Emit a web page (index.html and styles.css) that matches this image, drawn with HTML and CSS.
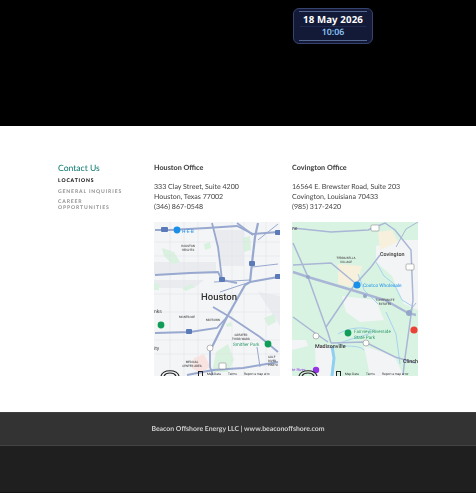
FILE: index.html
```html
<!DOCTYPE html>
<html lang="en">
<head>
<meta charset="utf-8">
<title>Contact Us</title>
<link rel="stylesheet" href="styles.css">
</head>
<body>
<header class="hero">
  <div class="clock">
    <div class="clock-date">18 May 2026</div>
    <div class="clock-time">10:06</div>
  </div>
</header>
<main class="contact">
  <nav class="side">
    <h2 class="side-title">Contact Us</h2>
    <a class="side-link active">LOCATIONS</a>
    <a class="side-link">GENERAL INQUIRIES</a>
    <a class="side-link">CAREER OPPORTUNITIES</a>
  </nav>
  <section class="office">
    <h3 class="office-name">Houston Office</h3>
    <p class="office-addr">333 Clay Street, Suite 4200<br>Houston, Texas 77002<br>(346) 867-0548</p>
    <div class="map">
      <svg viewBox="0 0 126 154" width="126" height="154">
        <rect width="126" height="154" fill="#f4f5f7"/>
        <g fill="#e9ebef"><path d="M0 40h62v12H0z"/><path d="M0 58h50l-10 8H0z"/><path d="M60 8h30v36H66z"/><path d="M104 70l22 4v30z"/></g>
        <g fill="#d9f1df">
          <path d="M8 26l12 4 6 10-8 2-8-8z"/><path d="M50 22l6-2 1 6-6 2z"/><path d="M62 130l12-8 6 16-6 12H58z"/><path d="M110 96l10-4 2 8-8 4z"/><path d="M88 16l8-2 1 14-7 2z"/><path d="M28 66l10-4 2 3-8 4z"/><path d="M0 62l5-1v7H0z"/><path d="M72 102l5-2 1 4-5 1z"/>
        </g>
        <path d="M40 136l10-4 6 12-8 8-10-6z" fill="#f8e3e0"/>
        <g fill="none" stroke="#e2e4e9" stroke-width=".6"><path d="M0 20h126M0 34h126M0 72h126M0 90h126M0 118h126M0 132h126M16 0v154M30 0v154M44 0v154M78 0v154M90 0v154M112 0v154"/></g>
        <g fill="none" stroke="#98a8cf" stroke-width="1.800">
          <path d="M1 8h15l37-2 30-2 16 8 25-2"/>
          <path d="M58 1l6 24 2 16 2 17"/>
          <path d="M1 53l35-2 28-1 4 8 15 3"/>
          <path d="M124 55l-28 5"/>
          <path d="M104 1l-3 14-3 26-2 19-5 3-18 32-15 30" stroke-width="2.200"/>
          <path d="M83 1l16 12"/>
          <path d="M59 85l17 10 30 20 18 15"/>
          <path d="M1 111l35-1 27-4 10-11"/>
          <path d="M56 126v19l3 8"/>
          <path d="M33 153l26-5 30-2 35-6"/>
          <path d="M103 125l3 20" stroke-width="1"/>
          <path d="M60 60l36-2M66 70l30-10" stroke-width="1"/>
          <path d="M124 42l-26 3M124 2l-20 16" stroke-width="1"/>
        </g>
        <text class="m-label big" x="47" y="78">Houston</text>
        <text class="m-label tiny mid" x="34" y="25">HOUSTON</text><text class="m-label tiny mid" x="34" y="29">HEIGHTS</text>
        <text class="m-label tiny mid" x="33" y="96">MONTROSE</text><text class="m-label tiny mid" x="59" y="99">MIDTOWN</text>
        <text class="m-label tiny mid" x="87" y="114">GREATER</text><text class="m-label tiny mid" x="87" y="117.500">THIRD WARD</text>
        <text class="m-label tiny mid" x="38" y="141">MEDICAL</text><text class="m-label tiny mid" x="38" y="145">CENTER AREA</text>
        <text class="m-label tiny" x="114" y="136">GULF</text><text class="m-label tiny" x="114" y="140">RIVER</text><text class="m-label tiny" x="114" y="144">PINE VI</text>
        <text class="m-label green" x="79" y="124">Smither Park</text>
        <text class="m-label blue" x="28" y="10.500">H-E-B</text>
        <text class="m-label small" x="0" y="91">nks</text><text class="m-label small" x="0" y="128">ity</text>
        <circle cx="23" cy="8" r="3.400" fill="#1a8fe8"/><circle cx="7" cy="103" r="3.400" fill="#0f9d58"/><circle cx="114" cy="122" r="3.400" fill="#0f9d58"/>
        <g fill="#5a7ab8"><rect x="7" y="5" width="7" height="5" rx="1"/><rect x="95" y="39" width="6" height="5" rx="1"/><rect x="65" y="55" width="6" height="5" rx="1"/><rect x="121" y="52" width="6" height="5" rx="1"/><rect x="32" y="107" width="6" height="5" rx="1"/><rect x="121" y="8" width="6" height="5" rx="1"/></g>
        <circle cx="56" cy="126" r="3" fill="#fff" stroke="#777" stroke-width=".5"/><rect x="65" y="141" width="7" height="6" rx="1" fill="#fff" stroke="#777" stroke-width=".5"/>
        <g fill="none" stroke="#222" stroke-width="1.200"><path d="M7 154c2-7 16-7 18 0M10 154c2-4 10-4 12 0"/></g>
        <rect x="44.500" y="149.500" width="4" height="5" fill="none" stroke="#222"/>
        <text class="m-attr" x="53" y="153">Map Data</text><text class="m-attr" x="74" y="153">Terms</text><text class="m-attr" x="90" y="153">Report a map erro</text>
      </svg>
    </div>
  </section>
  <section class="office">
    <h3 class="office-name">Covington Office</h3>
    <p class="office-addr">16564 E. Brewster Road, Suite 203<br>Covington, Louisiana 70433<br>(985) 317-2420</p>
    <div class="map">
      <svg viewBox="0 0 126 154" width="126" height="154">
        <rect width="126" height="154" fill="#d9f3e3"/>
        <g fill="#f3f4f5"><path d="M84 24l26-6 16 0v70l-14-6-12-28-16-14z"/><path d="M23 124h17l4 30H24z"/><path d="M50 74l34 4 8 20-24 2-14-10z"/><path d="M72 124l30 10 10 20H78z"/><path d="M0 118h14l2 6-16 4z"/></g>
        <g fill="#f6f0dc"><path d="M46 42l24 2-6 22-18-4z"/><path d="M86 10l14-2 6 12-18 8z"/></g>
        <g fill="none" stroke="#a6d3ee" stroke-width="1">
          <path d="M84 40l8 14 10 8 8 16 10 6"/>
          <path d="M46 112c10-6 24-8 34-4 8 3-22 8-34 14 8 4 20 0 26 6"/>
          <path d="M94 90l10 22 4 30"/>
          <path d="M66 52l6 16 14 14"/>
        </g>
        <path d="M40 124l2 12-2 18" fill="none" stroke="#8fd0f0" stroke-width="3"/>
        <g fill="none" stroke="#a9b6d6" stroke-width="1.500">
          <path d="M1 6l38 4 37-2 17-7 10 7 16 20 2 50-2 15-6 43-2 17"/>
          <path d="M1 50l15 5 47 14 30 9 23 13 8 2" stroke-width="2.400"/>
          <path d="M1 21l15 34 20 56 3 10"/>
          <path d="M34 105l27-40 18-20 9-12"/>
          <path d="M1 43l38-2 24 20"/>
          <path d="M39 121l34-1 30 15 21 6"/>
          <path d="M1 95l22 16 13 9"/>
          <path d="M104 25l10-18 12-7M116 91l8-10" stroke-width="1"/>
        </g>
        <circle cx="16" cy="55" r="2" fill="#94a6c8"/><circle cx="73" cy="74" r="2" fill="#94a6c8"/><circle cx="117" cy="91" r="3" fill="#94a6c8"/>
        <text class="m-label dark" x="88" y="34">Covington</text>
        <text class="m-label dark" x="23" y="126">Madisonville</text>
        <text class="m-label dark" x="111" y="141">Clinch</text>
        <text class="m-label tiny mid" x="54" y="37">TERRA BELLA</text><text class="m-label tiny mid" x="54" y="41">VILLAGE</text>
        <text class="m-label tiny mid" x="93" y="79">TCHEFUNCTE</text><text class="m-label tiny mid" x="93" y="83">ESTATES</text>
        <text class="m-label blue" x="71" y="65">Costco Wholesale</text>
        <text class="m-label green" x="62" y="111">Fairview-Riverside</text><text class="m-label green" x="62" y="117">State Park</text>
        <text class="m-label small" x="0" y="8">ne</text>
        <text class="m-label purple" x="0" y="149">te River</text>
        <circle cx="65" cy="63" r="3.600" fill="#1a8fe8"/><circle cx="56" cy="111" r="3.400" fill="#0f9d58"/><circle cx="122" cy="108" r="3.600" fill="#ea4335"/><circle cx="24" cy="148" r="3.200" fill="#9334e6"/>
        <g fill="#fff" stroke="#777" stroke-width=".5"><rect x="79" y="3" width="8" height="6" rx="1"/><rect x="114" y="42" width="8" height="6" rx="1"/><circle cx="24" cy="114" r="3"/><circle cx="74" cy="121" r="3"/></g>
        <g fill="none" stroke="#222" stroke-width="1.200"><path d="M7 154c2-7 16-7 18 0M10 154c2-4 10-4 12 0"/></g>
        <rect x="44.500" y="149.500" width="4" height="5" fill="none" stroke="#222"/>
        <text class="m-attr" x="53" y="153">Map Data</text><text class="m-attr" x="74" y="153">Terms</text><text class="m-attr" x="90" y="153">Report a map error</text>
      </svg>
    </div>
  </section>
</main>
<footer class="foot">
  <div class="foot-top">Beacon Offshore Energy LLC | www.beaconoffshore.com</div>
  <div class="foot-bottom"></div>
</footer>
</body>
</html>
```
FILE: styles.css
```css
* { box-sizing: border-box; }
html, body { margin: 0; padding: 0; }
body { background: #fff; font-family: "Lato", "Liberation Sans", sans-serif; height: 500px; overflow: hidden; text-rendering: geometricPrecision; }
.hero { background: #000; height: 126px; padding: 8px 0 0 293px; }
.clock { position: relative; width: 80px; height: 36px; background: #121a38; border: 1px solid #36436f; border-radius: 6px; text-align: center; padding-top: 4px; }
.clock::before, .clock::after { content: ""; position: absolute; left: 5px; right: 5px; height: 1px; background: #56678f; }
.clock::before { top: 2px; }
.clock::after { bottom: 2px; }
.clock-date { color: #fff; font: 700 9.7px/13px "Noto Sans", sans-serif; letter-spacing: .1px; white-space: nowrap; border-bottom: 1px solid #1f2a52; margin: 0 6px; }
.clock-time { color: #8cc4f5; font: 600 8.8px/11px "Noto Sans", sans-serif; }
.contact { height: 286px; display: flex; padding: 37px 0 0 58px; will-change: transform; }
.side { width: 96px; }
.side-title { margin: 0 0 4px; color: #0b7a6e; font: 400 8.6px/11px "Lato", sans-serif; }
.side-link { display: block; width: 70px; color: #999; font: 900 5.1px/6.500px "Lato", sans-serif; letter-spacing: .85px; margin-bottom: 4px; }
.side-link.active { color: #111; }
.side-link:nth-of-type(2) { margin-bottom: 3.500px; }
.office { width: 126px; margin-right: 12px; }
.office-name { margin: 0; font: 900 7.2px/10px "Lato", sans-serif; color: #4a4a4a; }
.office-addr { margin: 9px 0 0; font: 400 7.05px/9.800px "Lato", sans-serif; color: #444; height: 40px; }
.map { width: 126px; height: 154px; }
.map svg { display: block; filter: blur(.3px); }
.m-label { font-family: "Roboto", sans-serif; }
.mid { text-anchor: middle; }
.big { font-size: 9.500px; font-weight: 500; fill: #333; }
.dark { font-size: 5.400px; font-weight: 500; fill: #333; }
.small { font-size: 5px; fill: #444; }
.tiny { font-size: 3px; fill: #555; font-weight: 500; }
.green { font-size: 4.600px; fill: #2f9a6a; }
.blue { font-size: 4.800px; fill: #1a8fe8; }
.purple { font-size: 4px; fill: #9334e6; }
.m-attr { font: 3.200px "Roboto", sans-serif; fill: #333; }
.foot { will-change: transform; }
.foot-top { height: 34px; background: #333; border-top: 1px solid #3f3f3f; border-bottom: 1px solid #444; color: #d0d0d0; font: 700 6.9px/33px "Lato", sans-serif; text-align: center; }
.foot-bottom { height: 47px; background: #1f1f1f; border-bottom: 1px solid #111; }
```
